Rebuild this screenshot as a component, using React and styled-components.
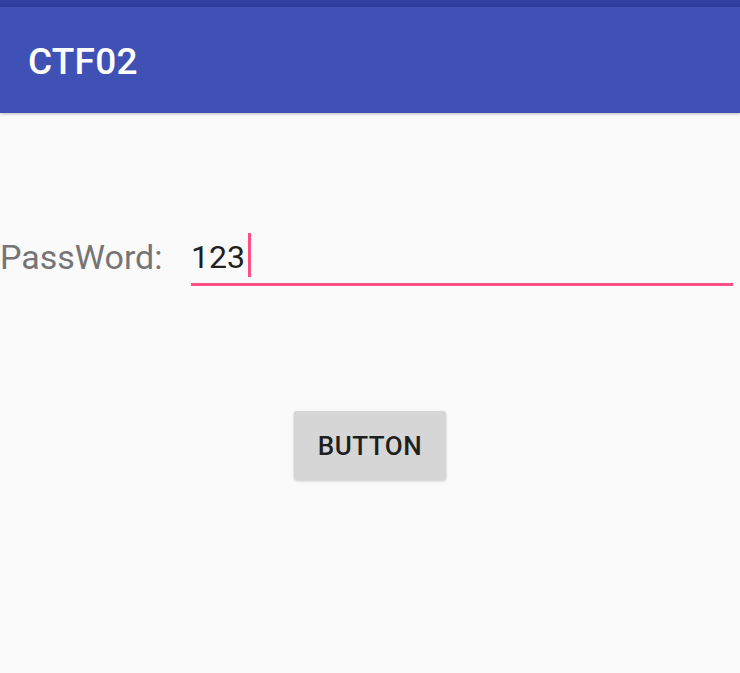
import React from "react";
import styled, { createGlobalStyle } from "styled-components";

const GlobalStyle = createGlobalStyle`
  body {
    margin: 0;
    background: #fafafa;
    font-family: Roboto, "Noto Sans", sans-serif;
  }
`;

const Screen = styled.div`
  width: 740px;
  height: 673px;
  background: #fafafa;
  display: flex;
  flex-direction: column;
  overflow: hidden;
`;

const StatusBar = styled.div`
  height: 7px;
  background: #303f9f;
`;

const Toolbar = styled.header`
  height: 106px;
  background: #3f51b5;
  display: flex;
  align-items: center;
  padding-left: 28px;
  box-shadow: 0 1px 3px rgba(0, 0, 0, 0.25);
`;

const Title = styled.h1`
  margin: 0;
  padding-top: 3px;
  color: #ffffff;
  font-size: 37px;
  font-weight: 500;
  letter-spacing: 0.2px;
`;

const FormRow = styled.div`
  margin-top: 120px;
  display: flex;
  align-items: flex-end;
  padding-right: 7px;
`;

const Label = styled.span`
  color: #757575;
  font-size: 34px;
  line-height: 44px;
  padding-bottom: 7px;
  width: 191px;
  flex-shrink: 0;
`;

const Field = styled.div`
  flex: 1;
  display: flex;
  align-items: center;
  height: 44px;
  padding-bottom: 6px;
  border-bottom: 3px solid #ff4f87;
  color: #212121;
  font-size: 32px;
  line-height: 44px;
`;

const Value = styled.span`
  padding-top: 3px;
`;

const Caret = styled.span`
  display: inline-block;
  width: 3px;
  height: 44px;
  margin-left: 3px;
  background: #ff4f87;
`;

const ButtonRow = styled.div`
  margin-top: 125px;
  display: flex;
  justify-content: center;
`;

const Button = styled.button`
  width: 152px;
  height: 69px;
  border: none;
  border-radius: 3px;
  background: #d6d6d6;
  box-shadow: 0 1px 3px rgba(0, 0, 0, 0.2);
  color: #1f1f1f;
  font-family: Roboto, "Noto Sans", sans-serif;
  font-size: 26px;
  font-weight: 500;
  letter-spacing: 0.5px;
  padding-top: 2px;
`;

export default function App() {
  return (
    <>
      <GlobalStyle />
      <Screen>
        <StatusBar />
        <Toolbar>
          <Title>CTF02</Title>
        </Toolbar>
        <FormRow>
          <Label>PassWord:</Label>
          <Field>
            <Value>123</Value>
            <Caret />
          </Field>
        </FormRow>
        <ButtonRow>
          <Button>BUTTON</Button>
        </ButtonRow>
      </Screen>
    </>
  );
}
